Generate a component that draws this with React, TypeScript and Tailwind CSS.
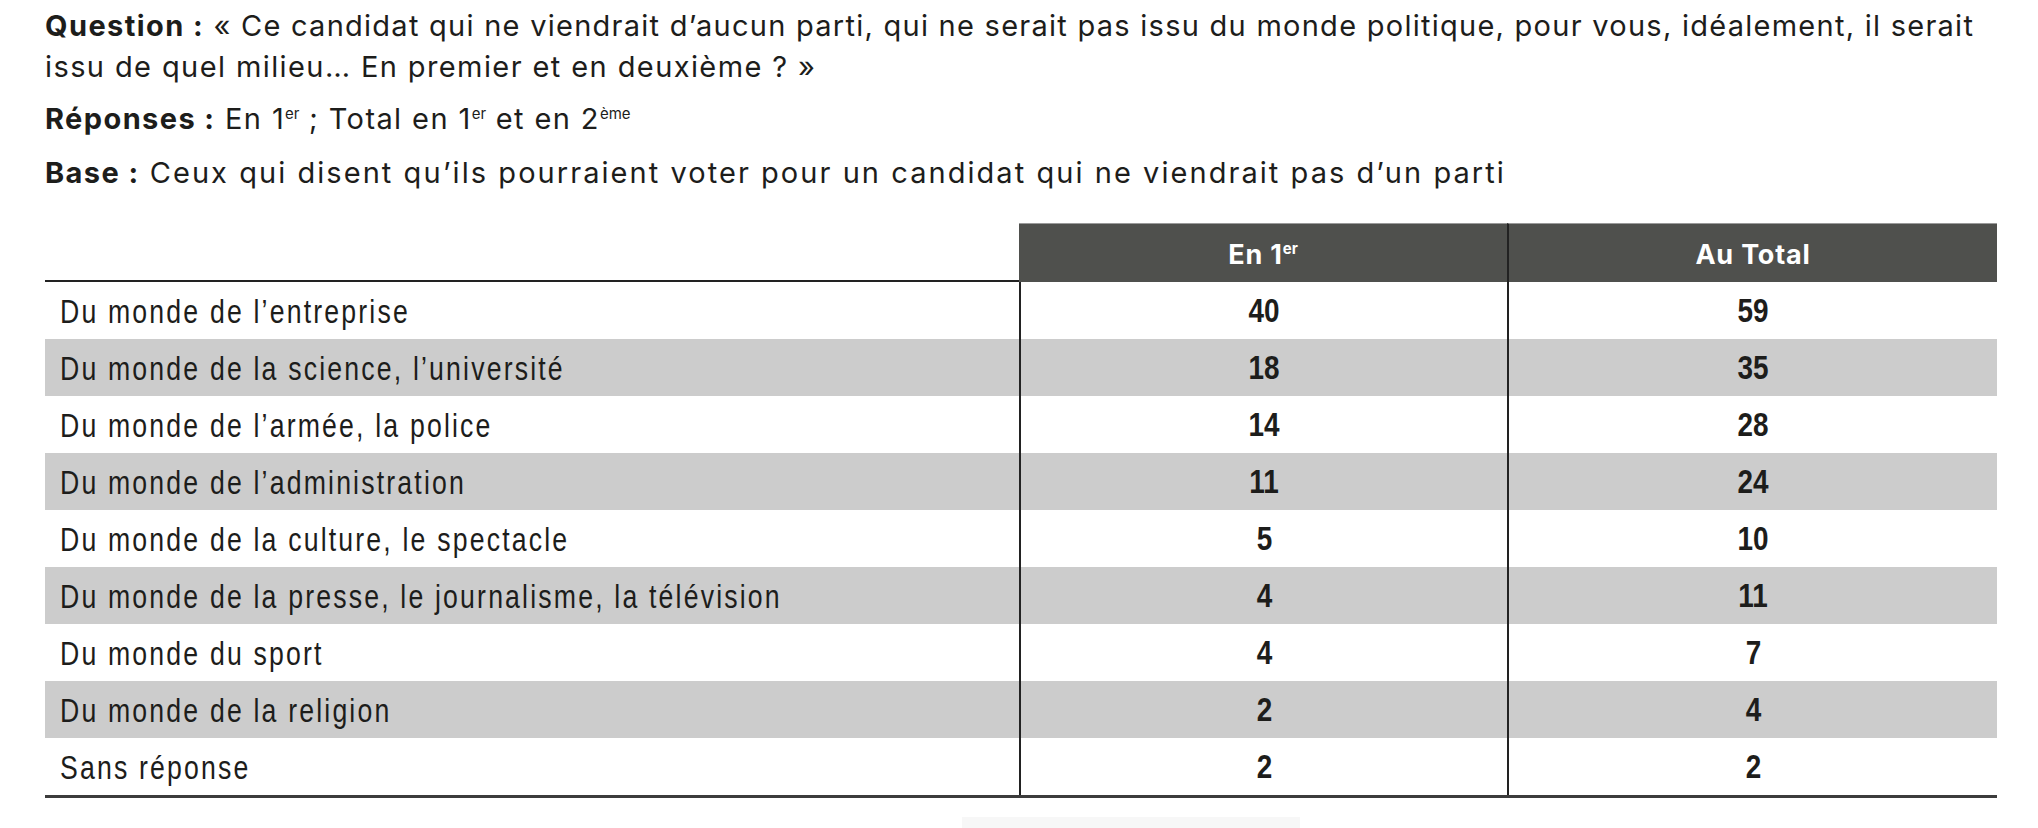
import React from "react";

const rows: [string, string, string][] = [
  ["Du monde de l’entreprise", "40", "59"],
  ["Du monde de la science, l’université", "18", "35"],
  ["Du monde de l’armée, la police", "14", "28"],
  ["Du monde de l’administration", "11", "24"],
  ["Du monde de la culture, le spectacle", "5", "10"],
  ["Du monde de la presse, le journalisme, la télévision", "4", "11"],
  ["Du monde du sport", "4", "7"],
  ["Du monde de la religion", "2", "4"],
  ["Sans réponse", "2", "2"],
];

const Sup = ({ children }: { children: React.ReactNode }) => (
  <span className="relative -top-[10px] text-[15px] leading-none tracking-normal">{children}</span>
);

export default function App() {
  return (
    <div className="w-[2038px] h-[828px] bg-white overflow-hidden text-[#1d1d1b]">
      {/* Intro text */}
      <div className="pl-[45px] pt-[5px] font-['Inter',sans-serif] text-[29px] tracking-[1.4px]">
        <p className="leading-[41px]">
          <span className="font-bold tracking-[1.4px]">Question :</span>
          <span className="tracking-[1.26px]"> « Ce candidat qui ne viendrait d’aucun parti, qui ne serait pas issu du monde politique, pour vous, idéalement, il serait</span>
          <br />
          issu de quel milieu… En premier et en deuxième ? »
        </p>
        <p className="leading-[41px] mt-[11px]">
          <span className="font-bold tracking-[1.4px]">Réponses :</span> En 1<Sup>er</Sup> ; Total en 1<Sup>er</Sup> et en 2<Sup>ème</Sup>
        </p>
        <p className="leading-[41px] mt-[13px] tracking-[2.05px]">
          <span className="font-bold tracking-[1.4px]">Base :</span> Ceux qui disent qu’ils pourraient voter pour un candidat qui ne viendrait pas d’un parti
        </p>
      </div>

      {/* Table */}
      <div className="ml-[45px] mt-[30px] w-[1952px]">
        <div className="flex h-[59px]">
          <div className="w-[974px] border-b-2 border-[#222]" />
          <div className="w-[488px] pt-[4px] bg-[#4f504d] border-t border-[#9a9a9a] flex items-center justify-center text-white font-['Inter',sans-serif] font-bold text-[27px] tracking-[0.8px]">
            <span>
              En 1<Sup>er</Sup>
            </span>
          </div>
          <div className="flex-1 pt-[4px] bg-[#4f504d] border-t border-l-2 border-t-[#9a9a9a] border-l-[#222] flex items-center justify-center text-white font-['Inter',sans-serif] font-bold text-[27px] tracking-[0.8px]">
            Au Total
          </div>
        </div>
        <div className="border-b-[3px] border-[#3c3c3c]">
          {rows.map(([label, a, b], i) => (
            <div
              key={i}
              className={`flex h-[57px] ${i % 2 === 1 ? "bg-[#cccccc]" : "bg-white"}`}
            >
              <div className="w-[974px] pl-[15px] pt-[3px] flex items-center">
                <span className="origin-left scale-x-[0.82] whitespace-nowrap font-['Liberation_Sans',Arial,sans-serif] text-[32.5px] tracking-[2.65px]">
                  {label}
                </span>
              </div>
              <div className="w-[488px] border-l-2 border-[#222] flex items-center justify-center">
                <span className="scale-x-[0.82] font-['Liberation_Sans',Arial,sans-serif] font-bold text-[34px]">
                  {a}
                </span>
              </div>
              <div className="flex-1 border-l-2 border-[#222] flex items-center justify-center">
                <span className="scale-x-[0.82] font-['Liberation_Sans',Arial,sans-serif] font-bold text-[34px]">
                  {b}
                </span>
              </div>
            </div>
          ))}
        </div>
      </div>
      <div className="ml-[962px] mt-[19px] w-[338px] h-[12px] bg-[#f7f7f7]" />
    </div>
  );
}
